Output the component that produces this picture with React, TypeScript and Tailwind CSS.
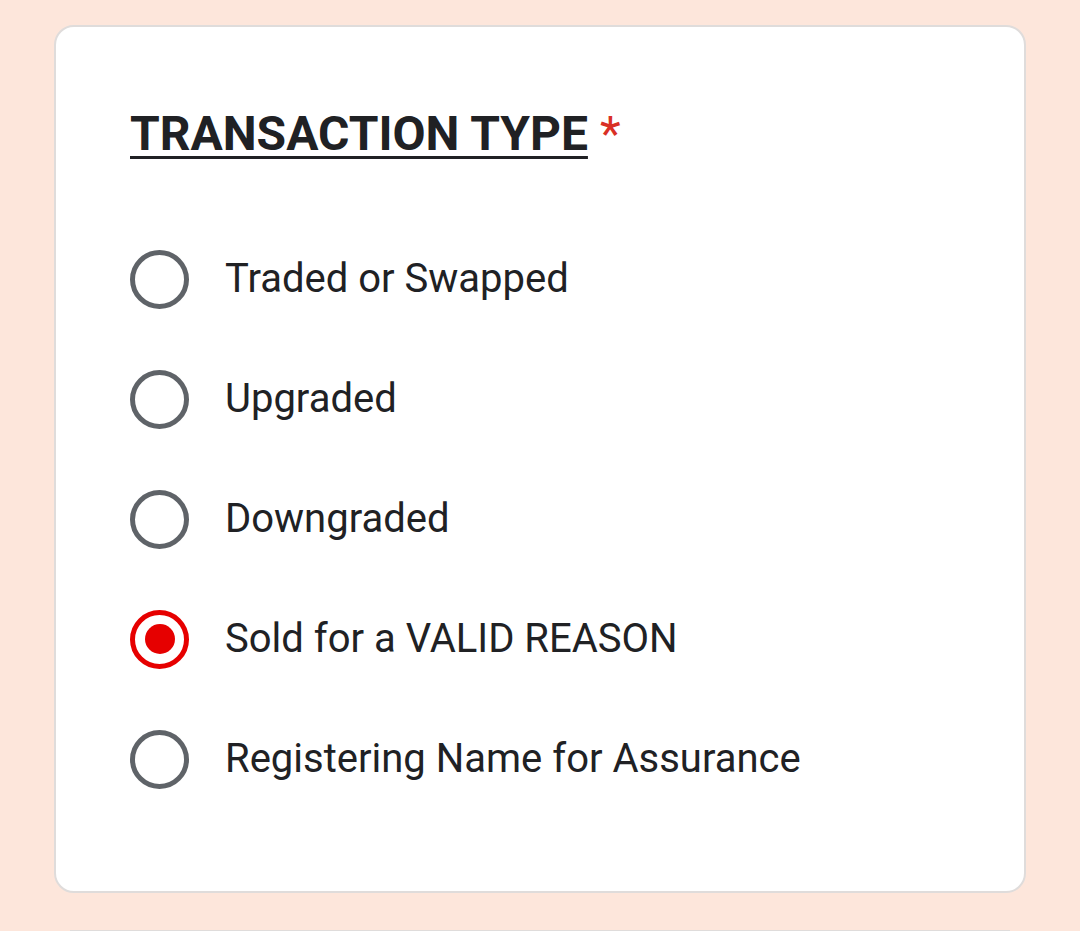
const options = [
  "Traded or Swapped",
  "Upgraded",
  "Downgraded",
  "Sold for a VALID REASON",
  "Registering Name for Assurance",
];

function Radio({ checked }: { checked: boolean }) {
  if (checked) {
    return (
      <span className="flex h-[59px] w-[59px] shrink-0 items-center justify-center rounded-full border-[5px] border-[#e60000]">
        <span className="h-[30px] w-[30px] rounded-full bg-[#e60000]" />
      </span>
    );
  }
  return <span className="h-[59px] w-[59px] shrink-0 rounded-full border-[5px] border-[#5f6368]" />;
}

export default function App() {
  return (
    <div className="min-h-[931px] bg-[#fde6db] pt-[25px] font-['Roboto',sans-serif] text-[#202124]">
      <div className="ml-[54px] h-[868px] w-[972px] rounded-[20px] border-2 border-[#dfdcdb] bg-white pl-[74px] pt-[80px]">
        <h2 className="flex items-center text-[48px] leading-[54px]">
          <span className="font-bold underline decoration-[3px] underline-offset-[6px]">TRANSACTION TYPE</span>
          <span className="ml-3 text-[#d93025]">*</span>
        </h2>
        <ul className="mt-[58px]">
          {options.map((o, i) => (
            <li key={o} className="flex h-[120px] items-center gap-9">
              <Radio checked={i === 3} />
              <span className="text-[40px] leading-none">{o}</span>
            </li>
          ))}
        </ul>
      </div>
      <div className="ml-[70px] mt-[37px] h-[4px] w-[940px] border-t-2 border-[#dfdcdb] bg-white" />
    </div>
  );
}
